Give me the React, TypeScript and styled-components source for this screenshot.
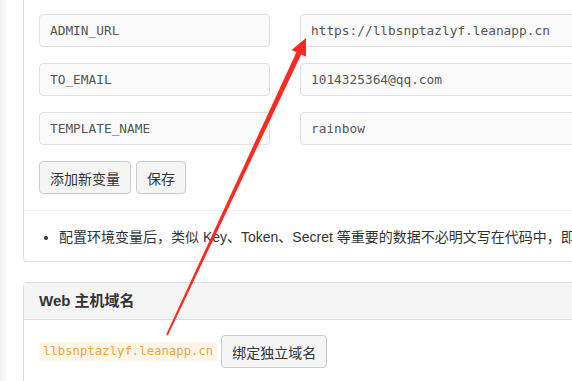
import styled, { createGlobalStyle } from 'styled-components';

const GlobalStyle = createGlobalStyle`
  html, body {
    margin: 0;
    padding: 0;
    overflow: hidden;
    background: linear-gradient(to right, #efefef 0, #f7f7f7 4px, #ffffff 8px);
    font-family: "Liberation Sans", "Noto Sans CJK SC", sans-serif;
    color: #333;
  }
`;

const envVars = [
  { name: 'ADMIN_URL', value: 'https://llbsnptazlyf.leanapp.cn' },
  { name: 'TO_EMAIL', value: '1014325364@qq.com' },
  { name: 'TEMPLATE_NAME', value: 'rainbow' },
];

export default function App() {
  return (
    <>
      <GlobalStyle />
      <Page>
        {/* 环境变量 */}
        <Panel $cropped>
          <PanelBody $top={14}>
            <VarGrid>
              {envVars.map((v) => (
                <Row key={v.name}>
                  <Field readOnly value={v.name} />
                  <Field readOnly value={v.value} />
                </Row>
              ))}
            </VarGrid>
            <Actions>
              <Button>添加新变量</Button>
              <Button>保存</Button>
            </Actions>
          </PanelBody>
          <Notes>
            <li>
              配置环境变量后，类似 Key、Token、Secret 等重要的数据不必明文写在代码中，即使代码公开也不会泄露这些信息。
            </li>
          </Notes>
        </Panel>

        {/* 域名 */}
        <Panel>
          <PanelHeader>Web 主机域名</PanelHeader>
          <PanelBody $top={15}>
            <DomainRow>
              <Code>llbsnptazlyf.leanapp.cn</Code>
              <Button>绑定独立域名</Button>
            </DomainRow>
          </PanelBody>
        </Panel>
      </Page>

      <Annotation width="572" height="381" viewBox="0 0 572 381">
        <polygon
          points="166.2,334.6 296.4,52.3 291.6,50 306,38 306,56.8 301.2,54.5 167.8,335.4"
          fill="#ff2a1f"
        />
      </Annotation>
    </>
  );
}

const Page = styled('div')`
  width: 900px;
  margin-left: 23px;
`;

const Panel = styled('section')<{ $cropped?: boolean }>`
  border: 1px solid #dddddd;
  border-top: ${({ $cropped }) => ($cropped ? 'none' : '1px solid #dddddd')};
  border-radius: ${({ $cropped }) => ($cropped ? '0 0 4px 4px' : '4px 4px 0 0')};
  background: #fff;
  margin-bottom: 20px;
`;

const PanelHeader = styled('div')`
  height: 36px;
  line-height: 36px;
  padding: 0 15px;
  background: #f5f5f5;
  border-bottom: 1px solid #dddddd;
  font-size: 15px;
  font-weight: 700;
  color: #333;
`;

const PanelBody = styled('div')<{ $top: number }>`
  padding: ${({ $top }) => $top}px 15px 16px;
`;

const VarGrid = styled('div')`
  display: flex;
  flex-direction: column;
  gap: 16px;
`;

const Row = styled('div')`
  display: grid;
  grid-template-columns: 231px 320px;
  column-gap: 30px;
`;

const Field = styled('input')`
  box-sizing: border-box;
  height: 33px;
  padding: 0 10px;
  border: 1px solid #e0e0e0;
  border-radius: 4px;
  background: #fafafa;
  font-family: "DejaVu Sans Mono", "Liberation Mono", monospace;
  font-size: 12.8px;
  color: #555;
  outline: none;
`;

const Actions = styled('div')`
  display: flex;
  gap: 5px;
  margin-top: 16px;
`;

const Button = styled('button')`
  box-sizing: border-box;
  height: 33px;
  padding: 0 10px;
  border: 1px solid #cccccc;
  border-radius: 4px;
  background: #f5f5f5;
  font-family: "Liberation Sans", "Noto Sans CJK SC", sans-serif;
  font-size: 14px;
  color: #333;
`;

const Notes = styled('ul')`
  margin: 0;
  padding: 16px 15px 14px 35px;
  border-top: 1px solid #eeeeee;
  font-size: 14px;
  line-height: 20px;
  white-space: nowrap;
`;

const DomainRow = styled('div')`
  display: flex;
  align-items: center;
  gap: 4px;
`;

const Code = styled('code')`
  padding: 2px 4px;
  border-radius: 3px;
  background: #fdf6e8;
  color: #f5a33a;
  font-family: "DejaVu Sans Mono", "Liberation Mono", monospace;
  font-size: 12.3px;
  line-height: 15px;
`;

const Annotation = styled('svg')`
  position: fixed;
  top: 0;
  left: 0;
  pointer-events: none;
`;
